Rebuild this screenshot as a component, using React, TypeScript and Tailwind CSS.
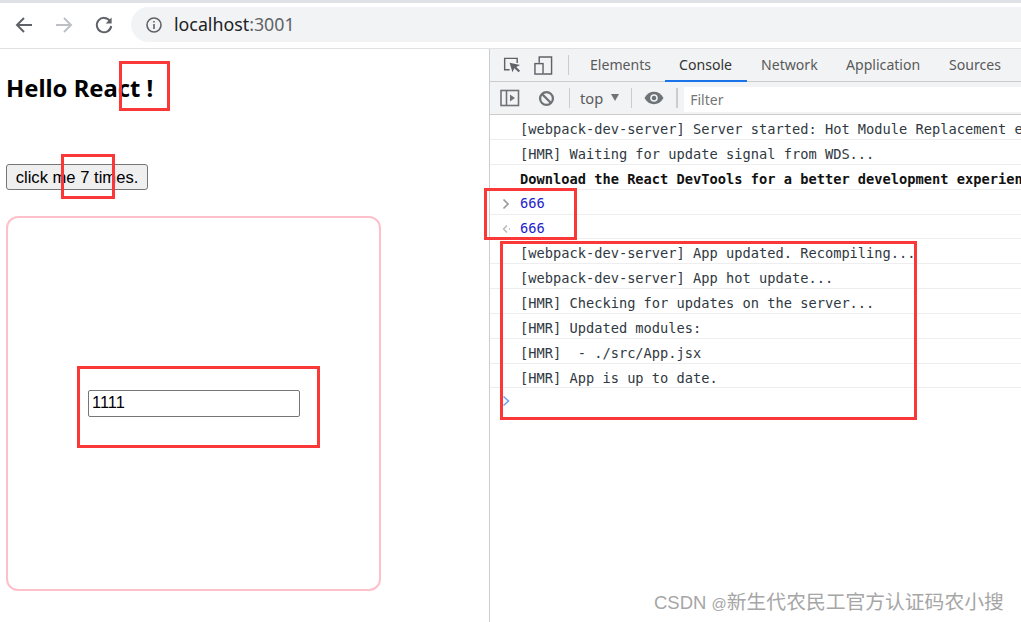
import React from "react";

const logs: { t: string; bold?: boolean }[] = [
  { t: "[webpack-dev-server] Server started: Hot Module Replacement enabled" },
  { t: "[HMR] Waiting for update signal from WDS..." },
  { t: "Download the React DevTools for a better development experience", bold: true },
];
const logs2 = [
  "[webpack-dev-server] App updated. Recompiling...",
  "[webpack-dev-server] App hot update...",
  "[HMR] Checking for updates on the server...",
  "[HMR] Updated modules:",
  "[HMR]  - ./src/App.jsx",
  "[HMR] App is up to date.",
];

function Row({ children, bold, h = "h-[25px]", pt = "pt-[5px]" }: { children: React.ReactNode; bold?: boolean; h?: string; pt?: string }) {
  return (
    <div className={`${h} ${pt} flex items-center pl-[30px] border-b border-[#eeeeee] whitespace-pre overflow-hidden ${bold ? "font-bold text-[#111111]" : "text-[#303942]"}`}>
      {children}
    </div>
  );
}

function RedBox({ cls }: { cls: string }) {
  return <div className={`absolute border-[3px] border-[#fb3838] pointer-events-none ${cls}`} />;
}

export default function App() {
  return (
    <div className="relative w-[1021px] h-[622px] overflow-hidden bg-white flex flex-col font-['Noto_Sans',sans-serif]">
      <div className="h-[3px] bg-[#dee1e6] shrink-0" />
      <div className="h-[46px] shrink-0 flex items-center border-b border-[#dfe1e5] bg-white">
        <div className="w-[131px] flex items-center shrink-0 pl-[14px] gap-[20px] -mt-[1px]">
          <svg width="20" height="20" viewBox="0 0 20 20" fill="none" stroke="#5f6368" strokeWidth="2"><path d="M18 10H3M10 3l-7 7 7 7" /></svg>
          <svg width="20" height="20" viewBox="0 0 20 20" fill="none" stroke="#bdc1c6" strokeWidth="2"><path d="M2 10h15M10 3l7 7-7 7" /></svg>
          <svg width="20" height="20" viewBox="0 0 20 20" fill="none" stroke="#5f6368" strokeWidth="2"><path d="M16 6a7.200 7.200 0 1 0 1.200 5" /><path d="M17.600 2.400v6h-6z" fill="#5f6368" stroke="none" /></svg>
        </div>
        <div className="flex-1 h-[35px] -mt-[2px] rounded-l-full bg-[#f1f3f4] flex items-center pl-[14px]">
          <svg width="18" height="18" viewBox="0 0 18 18" fill="none" stroke="#5f6368" strokeWidth="1.600"><circle cx="9" cy="9" r="7" /><path d="M9 8v5M9 5v1.600" /></svg>
          <span className="ml-[11px] text-[17.800px] leading-none text-[#202124]">localhost<span className="text-[#5f6368]">:3001</span></span>
        </div>
      </div>

      <div className="flex flex-1 min-h-0">
        <div className="w-[489px] shrink-0 pl-[6px]">
          <h1 className="mt-[21px] text-[23.800px] leading-[36px] font-bold text-black">Hello React !</h1>
          <button className="mt-[58px] block w-[142px] h-[26px] pt-[3px] border border-[#767676] rounded-[3px] bg-[#efefef] text-black text-[16.600px] leading-none font-['Liberation_Sans',sans-serif]">click me 7 times.</button>
          <div className="mt-[26px] w-[375px] h-[375px] border-2 border-[#ffc0cb] rounded-[12px] flex items-center justify-center">
            <div className="w-[212px] h-[27px] pb-[2px] border border-[#767676] rounded-[2px] flex items-center pl-[3.500px] text-[16.400px] text-black font-['Liberation_Sans',sans-serif]">1111</div>
          </div>
        </div>

        <div className="flex-1 min-w-0 border-l border-[#cccccc] flex flex-col">
          <div className="h-[33px] shrink-0 bg-[#f1f3f4] border-b border-[#cccccc] flex items-stretch text-[14.100px] text-[#5a5a5a] whitespace-nowrap">
            <div className="flex items-center pl-[12px] gap-[13px] w-[78px] shrink-0">
              <svg width="19" height="20" viewBox="0 0 20 20" fill="none" stroke="#5f6368" strokeWidth="1.500"><path d="M8 15H2.800V3H16v5" /><path d="M8 7.500l3 10 2-4 4.500 4 1.500-1.500-4-4 4-2z" fill="#5f6368" stroke="none" /></svg>
              <svg width="19" height="21" viewBox="0 0 20 22" fill="none" stroke="#5f6368" strokeWidth="1.500"><path d="M5.500 8V2h13v18H10" /><rect x="1" y="9" width="8.500" height="11" /></svg>
            </div>
            <div className="w-px h-[20px] self-center bg-[#cccccc]" />
            <div className="w-[96px] pl-[21px] shrink-0 flex items-center">Elements</div>
            <div className="w-[82px] pl-[14px] shrink-0 flex items-center text-[#333333] border-b-2 border-[#1a73e8] h-[33px]">Console</div>
            <div className="w-[85px] pl-[14px] shrink-0 flex items-center">Network</div>
            <div className="w-[103px] pl-[14px] shrink-0 flex items-center">Application</div>
            <div className="pl-[14px] flex items-center">Sources</div>
          </div>

          <div className="h-[33px] shrink-0 bg-[#f1f3f4] border-b border-[#cccccc] flex items-center text-[14.700px] text-[#5a5a5a] whitespace-nowrap">
            <svg className="ml-[10px] shrink-0" width="20" height="18" viewBox="0 0 20 18" fill="none" stroke="#6e7378" strokeWidth="1.600"><rect x="1" y="1.500" width="17.500" height="15" /><path d="M6.500 1.500V16.500" /><path d="M10 5.500l5 3.500-5 3.500z" fill="#6e7378" stroke="none" /></svg>
            <svg className="ml-[18px] shrink-0" width="17" height="17" viewBox="0 0 18 18" fill="none" stroke="#6e7378" strokeWidth="2.400"><circle cx="9" cy="9" r="6.800" /><path d="M4.500 4.500l9 9" /></svg>
            <div className="w-px h-[20px] bg-[#cccccc] ml-[14px] shrink-0" />
            <span className="ml-[10px] pt-[1px]">top</span>
            <svg className="ml-[7px] shrink-0" width="10" height="8" viewBox="0 0 10 8"><path d="M1 0h8L5 7z" fill="#6e7378" /></svg>
            <div className="w-px h-[20px] bg-[#cccccc] ml-[11px] shrink-0" />
            <svg className="ml-[12px] shrink-0" width="20" height="14" viewBox="0 0 21 14"><path d="M.5 7C3 2.500 6.500.5 10.500.5S18 2.500 20.500 7C18 11.500 14.500 13.500 10.500 13.500S3 11.500.5 7z" fill="#6e7378" /><circle cx="10.500" cy="7" r="4" fill="#f1f3f4" /><circle cx="10.500" cy="7" r="2.400" fill="#6e7378" /></svg>
            <div className="w-[2px] h-[20px] bg-[#cccccc] ml-[12px] shrink-0" />
            <div className="ml-[6px] flex-1 h-[25px] mt-[2px] bg-white flex items-center pl-[6px] text-[14px] text-[#757575]">Filter</div>
          </div>

          <div className="flex-1 text-[13.700px] font-['DejaVu_Sans_Mono','Liberation_Mono',monospace] leading-none">
            {logs.map((l) => <Row key={l.t} bold={l.bold}>{l.t}</Row>)}
            <div className="h-[25px] pt-[4px] flex items-center pl-[11px] border-b border-[#eeeeee] text-[#2222cc]">
              <svg className="shrink-0" width="10" height="12" viewBox="0 0 10 12" fill="none" stroke="#9a9a9a" strokeWidth="1.700"><path d="M2.500 1.500l4.500 4.500-4.500 4.500" /></svg>
              <span className="ml-[9px]">666</span>
            </div>
            <div className="h-[24px] pt-[4px] flex items-center pl-[11px] border-b border-[#eeeeee] text-[#2222cc]">
              <svg className="shrink-0" width="10" height="12" viewBox="0 0 10 12" fill="none" stroke="#b5b5b5" strokeWidth="1.300"><path d="M6 2.500L2.500 6 6 9.500M8 6h1" /></svg>
              <span className="ml-[9px]">666</span>
            </div>
            {logs2.map((t, i) => <Row key={t} h={i === 5 ? "h-[24px]" : "h-[25px]"} pt={i === 5 ? "pt-[6px]" : "pt-[5px]"}>{t}</Row>)}
            <div className="pl-[12px] pt-[7px]">
              <svg width="9" height="12" viewBox="0 0 9 12" fill="none" stroke="#6c9ef0" strokeWidth="1.500"><path d="M1.500 1.500L6.500 6l-5 4.500" /></svg>
            </div>
          </div>
        </div>
      </div>

      <RedBox cls="left-[119px] top-[61px] w-[51px] h-[50px]" />
      <RedBox cls="left-[61px] top-[154px] w-[54px] h-[45px]" />
      <RedBox cls="left-[77px] top-[366px] w-[243px] h-[82px]" />
      <RedBox cls="left-[484px] top-[188px] w-[93px] h-[52px]" />
      <RedBox cls="left-[500px] top-[241px] w-[417px] h-[179px]" />
      <div className="absolute left-[654px] top-[589px] text-[18.500px] leading-[26px] text-[#a6a6a6] whitespace-nowrap font-['Liberation_Sans','Noto_Sans_CJK_SC',sans-serif]">CSDN <span className="text-[15px]">@</span><span className="text-[19.800px]">新生代农民工官方认证码农小搜</span></div>
    </div>
  );
}
